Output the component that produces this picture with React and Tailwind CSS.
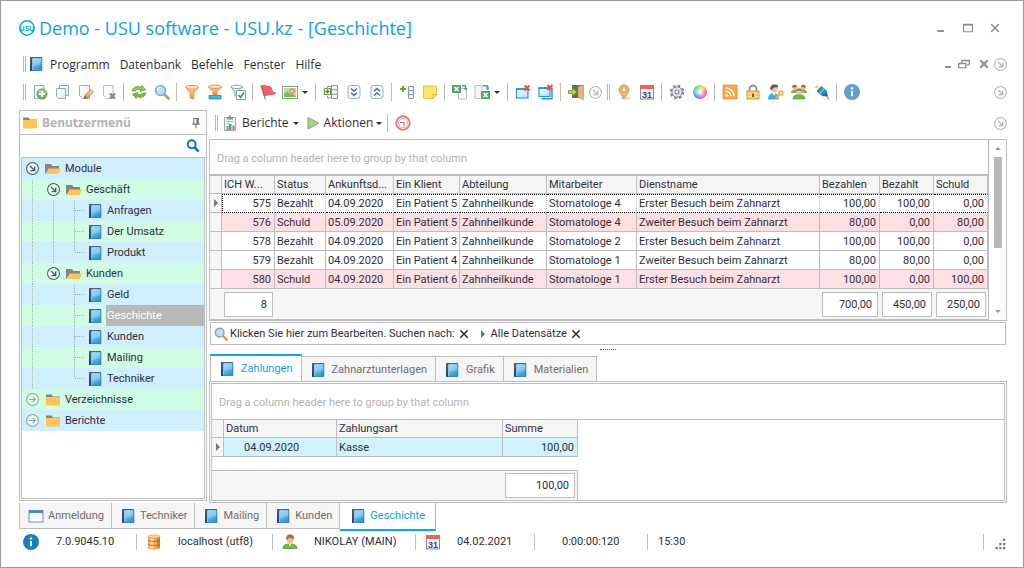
// src/App.jsx
// USU client main window: user menu, visit history grid, payments detail
import React, { useState } from 'react'

// Shared gradients for all the icons below
function IconDefs() {
  return (
    <svg className="absolute h-0 w-0" aria-hidden="true">
      <defs>
        <linearGradient id="gBook" x1="0" y1="0" x2="0.4" y2="1">
          <stop offset="0" stopColor="#8fd2f4" />
          <stop offset="0.5" stopColor="#6cc0ee" />
          <stop offset="1" stopColor="#2f97d8" />
        </linearGradient>
        <linearGradient id="gSpine" x1="0" y1="0" x2="0" y2="1">
          <stop offset="0" stopColor="#4a5f80" />
          <stop offset="1" stopColor="#1b3d74" />
        </linearGradient>
        <linearGradient id="gOrange" x1="0" y1="0" x2="0" y2="1">
          <stop offset="0" stopColor="#ffd9a8" />
          <stop offset="1" stopColor="#f08a32" />
        </linearGradient>
        <linearGradient id="gGreen" x1="0" y1="0" x2="0" y2="1">
          <stop offset="0" stopColor="#b6e38a" />
          <stop offset="1" stopColor="#5fae3a" />
        </linearGradient>
        <linearGradient id="gPaper" x1="0" y1="0" x2="1" y2="1">
          <stop offset="0" stopColor="#ffffff" />
          <stop offset="1" stopColor="#dfe8f5" />
        </linearGradient>
        <linearGradient id="gWin" x1="0" y1="0" x2="1" y2="1">
          <stop offset="0" stopColor="#ffffff" />
          <stop offset="1" stopColor="#aedcf8" />
        </linearGradient>
      </defs>
    </svg>
  )
}

function Ico({ children, className = 'h-4 w-4' }) {
  return <svg viewBox="0 0 16 16" fill="none" className={`shrink-0 ${className}`} aria-hidden="true">{children}</svg>
}

const Book = () => (
  <Ico>
    <path d="M2 1h12v1.500H2z" fill="#53647e" />
    <path d="M2 1.500h3V15H2z" fill="url(#gSpine)" />
    <rect x="5" y="2" width="9" height="12.500" fill="url(#gBook)" />
    <path d="M5 3h8.500v5L5 10z" fill="#fff" opacity=".2" />
    <path d="M4.500 2.500v12" stroke="#d6eefb" strokeWidth=".7" />
    <path d="M3 14.500h11M13.800 2v12.500" stroke="#2878b0" strokeWidth=".8" />
  </Ico>
)
const Folder = () => (
  <Ico>
    <path d="M1 2.500h5.500L8 4.500h7V7H1z" fill="#858585" />
    <path d="M1 5h14v8.500H1z" fill="#ffc35c" />
  </Ico>
)
const FolderOpen = () => (
  <Ico>
    <path d="M0 13V3h6l1.500 2H14v3H4.500z" fill="#858585" />
    <path d="M3.500 7.500H16L13.500 13H1z" fill="#ffc35c" />
  </Ico>
)
const NewDoc = () => (
  <Ico>
    <path d="M2.500 1.500H12v13H2.500z" fill="url(#gPaper)" stroke="#8fa9cf" />
    <circle cx="10" cy="10" r="5" fill="url(#gGreen)" stroke="#5b9b45" />
    <path d="M10 7v6M7 10h6" stroke="#fff" strokeWidth="1.800" />
  </Ico>
)
const Copy = () => (
  <Ico>
    <path d="M4.500 1.500h9v10h-9z" fill="url(#gPaper)" stroke="#8fa9cf" />
    <path d="M1.500 4.500h9v10h-7l-2-2z" fill="url(#gPaper)" stroke="#8fa9cf" />
  </Ico>
)
const Edit = () => (
  <Ico>
    <path d="M1.500 1.500h10v13h-7l-3-3z" fill="url(#gPaper)" stroke="#8fa9cf" />
    <path d="M6 14.500 7.200 11 13 5.500 15.500 8 9.500 13.500z" fill="url(#gOrange)" stroke="#b87333" strokeWidth=".8" />
    <path d="M6 14.500 7 12l1.500 1.500z" fill="#555" />
  </Ico>
)
const DeleteDoc = () => (
  <Ico>
    <path d="M2.500 1.500h9.500v13H5.500l-3-3z" fill="#fafafa" stroke="#bdbdbd" />
    <path d="M9 9.500 14 14.500M14 9.500 9 14.500" stroke="#8b8b8b" strokeWidth="2.400" />
  </Ico>
)
const Refresh = () => (
  <Ico>
    <path d="M1 7C2 3 6 1.500 10 3.500L11 1.500 14.500 6 9 7.500 9.800 5.800C7 4.600 5 5 4.200 7.200z" fill="#8bd04f" stroke="#4f9a2c" strokeWidth=".7" />
    <path d="M15 9c-1 4-5 5.500-9 3.500L5 14.500 1.500 10 7 8.500 6.200 10.200c2.800 1.200 4.800.8 5.600-1.400z" fill="#6fbf3f" stroke="#4f9a2c" strokeWidth=".7" />
  </Ico>
)
const Magnifier = () => (
  <Ico>
    <path d="M10.500 10.500 14.500 14.500" stroke="#dd9150" strokeWidth="2.600" strokeLinecap="round" />
    <circle cx="6.500" cy="6.500" r="5" fill="#bfe0f8" stroke="#7fa3d4" strokeWidth="1.400" />
    <path d="M3.500 6a3 3 0 0 1 3-2.800" stroke="#fff" strokeWidth="1.300" />
  </Ico>
)
const FunnelShape = ({ fill, stroke }) => (
  <>
    <path d="M1.500 3.500 6.300 9v5l3.400 1V9l4.800-5.500z" fill={fill} stroke={stroke} strokeWidth=".9" />
    <ellipse cx="8" cy="3.300" rx="6.500" ry="1.900" fill="#ffe3bf" stroke={stroke} strokeWidth=".9" />
  </>
)
const Funnel = () => <Ico><FunnelShape fill="url(#gOrange)" stroke="#dd8a3e" /></Ico>
const FunnelEdit = () => (
  <Ico>
    <path d="M1.500 3 6 7.500v3.500h4V7.500L14.500 3z" fill="url(#gOrange)" stroke="#dd8a3e" strokeWidth=".9" />
    <ellipse cx="8" cy="2.800" rx="6.500" ry="1.700" fill="#ffe3bf" stroke="#dd8a3e" strokeWidth=".9" />
    <path d="M2 11.500h12v3.500H2z" fill="#3cb7e8" stroke="#1c86b8" strokeWidth=".8" />
  </Ico>
)
const FunnelCheck = () => (
  <Ico>
    <path d="M1 3 5 8v4l2.500 1V8l5-5z" fill="#e4e8f0" stroke="#8790a6" strokeWidth=".9" />
    <ellipse cx="6.500" cy="2.800" rx="5.700" ry="1.700" fill="#fff" stroke="#8790a6" strokeWidth=".9" />
    <path d="M6.500 6.500h9v9h-9z" fill="#fff" stroke="#7f9cc4" />
    <path d="M8.500 11l2 2.300L14 8.500" stroke="#3c9c3c" strokeWidth="1.700" />
  </Ico>
)
const Flag = () => (
  <Ico>
    <path d="M1 1.500 5.500 15.500" stroke="#9c8b86" strokeWidth="1.300" />
    <path d="M1.500 2c3-2.300 4.500 1 7 .3 2.300-.6 2.800 1.400 3.500 3.700.7 2.300 1.800 2.500 3.800 2.500-1.800 3-4.300 1.300-6.800 2.300-1.900.8-3.300.3-4.800 1z" fill="#ec6468" stroke="#cc4147" strokeWidth=".7" />
  </Ico>
)
const Picture = () => (
  <Ico>
    <rect x=".5" y="2.500" width="15" height="12" fill="#fff" stroke="#86a66e" />
    <path d="M2 4h12v9H2z" fill="#a9d8e6" />
    <path d="M2 13V9.500l3.500-2 3 3 2-1L14 13z" fill="#7dbb50" />
    <circle cx="10" cy="7" r="2.800" fill="#f59042" />
    <circle cx="10" cy="7" r="1" fill="#ffe9a8" />
  </Ico>
)
const PlusGrid = () => (
  <Ico>
    <path d="M8.500 1.500h6v13h-6zM8.500 5.800h6M8.500 10.200h6" fill="#f4f6fb" stroke="#8795b5" />
    <path d="M8 2.500H4.500v2M4.500 12v2H8" stroke="#8795b5" />
    <rect x="1.500" y="4.500" width="6" height="6" fill="#eaf7dc" stroke="#6d9c46" />
    <path d="M4.500 5.500v4M2.500 7.500h4" stroke="#4b8f26" strokeWidth="1.300" />
  </Ico>
)
const ExpandAll = () => (
  <Ico>
    <rect x="2" y="1.500" width="12" height="13" rx="2.500" fill="#f7fbff" stroke="#8fb0cc" />
    <path d="M5 4.500l3 2.500 3-2.500M5 8.800l3 2.500 3-2.500" stroke="#4a6a9e" strokeWidth="1.500" />
  </Ico>
)
const CollapseAll = () => (
  <Ico>
    <rect x="2" y="1.500" width="12" height="13" rx="2.500" fill="#f7fbff" stroke="#8fb0cc" />
    <path d="M5 7.200l3-2.500 3 2.500M5 11.500l3-2.500 3 2.500" stroke="#4a6a9e" strokeWidth="1.500" />
  </Ico>
)
const PlusColumn = () => (
  <Ico>
    <path d="M9.500 2.500h5v12h-5zM9.500 6.500h5M9.500 10.500h5" fill="#f1f4fb" stroke="#8795b5" />
    <path d="M4 2v6M1 5h6" stroke="#6aa43c" strokeWidth="2.200" />
  </Ico>
)
const Note = () => (
  <Ico>
    <path d="M1.500 2h13v8.500L11 14.500H1.500z" fill="#fbe566" stroke="#dcb93a" strokeWidth=".8" />
    <path d="M14.500 10.500H11v4z" fill="#fff6b8" stroke="#cfa62c" strokeWidth=".8" />
  </Ico>
)
const ExcelExport = () => (
  <Ico>
    <path d="M6.500 4.500h8v10.500h-8z" fill="#fff" stroke="#bdbdbd" />
    <rect x="0" y="1" width="9" height="8" fill="#57a566" />
    <path d="M2.500 3l4 4M6.500 3l-4 4" stroke="#fff" strokeWidth="1.500" />
    <path d="M10 1.800h3.500v3" stroke="#3a9fd6" strokeWidth="1.500" />
    <path d="M11.300 4h4.400l-2.200 2.500z" fill="#3a9fd6" />
  </Ico>
)
const ExcelImport = () => (
  <Ico>
    <path d="M1 1.500h7v13H1z" fill="#f7f7f7" stroke="#c2c2c2" />
    <rect x="7" y="7" width="9" height="8" fill="#57a566" />
    <path d="M9.500 9l4 4M13.500 9l-4 4" stroke="#fff" strokeWidth="1.500" />
    <path d="M9 1.800h4.500v2" stroke="#3a9fd6" strokeWidth="1.500" />
    <path d="M11.300 3.500h4.400L13.500 6z" fill="#3a9fd6" />
  </Ico>
)
const CloseWin = () => (
  <Ico>
    <rect x="1.500" y="5" width="11.500" height="9" fill="url(#gWin)" stroke="#2596dc" strokeWidth="1.200" />
    <path d="M1 5h12.500" stroke="#2596dc" strokeWidth="1.800" />
    <path d="M9.500 1.500l5 5M14.500 1.500l-5 5" stroke="#e0523a" strokeWidth="2" />
  </Ico>
)
const CloseAllWin = () => (
  <Ico>
    <path d="M3.500 14.800H14V6" stroke="#2596dc" strokeWidth="1.400" />
    <rect x="1" y="4" width="11" height="8.500" fill="url(#gWin)" stroke="#2596dc" strokeWidth="1.200" />
    <path d="M.5 4h12" stroke="#2596dc" strokeWidth="1.800" />
    <path d="M9.500 1l5 5M14.500 1l-5 5" stroke="#e0523a" strokeWidth="2" />
  </Ico>
)
const Exit = () => (
  <Ico>
    <path d="M4 1h11v13H4z" fill="#6e6a6a" />
    <path d="M10 2.500 15.500 1v14.500L10 13.500z" fill="#e9b27c" stroke="#b98450" strokeWidth=".6" />
    <path d="M.5 6.500h4V4L9 8l-4.500 4V9.500h-4z" fill="#a4da4c" stroke="#5f9a22" strokeWidth=".8" />
  </Ico>
)
const Pin = () => (
  <Ico>
    <ellipse cx="9.500" cy="14" rx="5" ry="1.500" fill="#d9d9d9" />
    <path d="M8 15C6 11 3 9 3 5.800a5 5 0 0 1 10 0C13 9 10 11 8 15z" fill="#eeb46a" stroke="#c99048" strokeWidth=".8" />
    <circle cx="8" cy="5.800" r="2.100" fill="#fff" stroke="#c99048" strokeWidth=".7" />
  </Ico>
)
const Calendar = () => (
  <Ico>
    <rect x="1.500" y="1.500" width="13" height="13.500" fill="#f3f5fb" stroke="#7f8bb0" />
    <rect x="1" y="1" width="14" height="4" fill="#e9665c" />
    <text x="8" y="13.500" textAnchor="middle" fill="#3c4a7a" className="font-['Liberation_Sans'] text-[9px] font-bold">31</text>
  </Ico>
)
const Gear = () => (
  <Ico>
    <circle cx="8" cy="8" r="6.300" stroke="#7d8499" strokeWidth="2" strokeDasharray="2.600 2.350" />
    <circle cx="8" cy="8" r="5.200" fill="#e4e8f1" stroke="#7d8499" strokeWidth="1" />
    <circle cx="8" cy="8" r="2" fill="#fff" stroke="#7d8499" strokeWidth="1.100" />
  </Ico>
)
const Rss = () => (
  <Ico>
    <rect x="1" y="1" width="14" height="14" fill="#f9a64a" stroke="#ee8e2c" strokeWidth=".8" />
    <circle cx="4.800" cy="11.500" r="1.300" fill="#fff" />
    <path d="M3.800 7.300a5 5 0 0 1 5 5M3.800 4a8.300 8.300 0 0 1 8.300 8.300" stroke="#fff" strokeWidth="1.500" />
  </Ico>
)
const Lock = () => (
  <Ico>
    <path d="M4.500 8V5a3.500 3.500 0 0 1 7 0v3" stroke="#8f8f8f" strokeWidth="1.800" />
    <rect x="2" y="7" width="12" height="8" fill="#fbc967" stroke="#cf9236" strokeWidth=".9" />
    <path d="M2.500 9.500h11M2.500 12.500h11" stroke="#fde6ae" strokeWidth=".8" />
    <path d="M7 9.500h2v3.500H7z" fill="#7d6030" />
  </Ico>
)
const UserKey = () => (
  <Ico>
    <path d="M0 15.500c0-4.500 2.500-6.500 5.500-6.500s5.500 2 5.500 6.500z" fill="#41aee8" />
    <path d="M4.500 9h3L6 12z" fill="#fff" />
    <circle cx="6.300" cy="4.800" r="3.700" fill="#efc49c" />
    <path d="M2.300 5.500C1.800 1 5 0 7.500.5 10 .6 10.500 2.500 9.900 3.500 7.500 2.800 5 3 4 6z" fill="#5d5d5d" />
    <circle cx="12.800" cy="9" r="2" stroke="#efb040" strokeWidth="1.700" />
    <path d="M11.500 10.500 7.500 14.500M9 13l1.500 1.500" stroke="#efb040" strokeWidth="1.600" />
  </Ico>
)
const Group = () => (
  <Ico>
    <path d="M0 9c0-2.500 1.500-3 3.500-3S7 6.500 7 9zM9 9c0-2.500 1.500-3 3.500-3S16 6.500 16 9z" fill="#6fb84a" />
    <circle cx="3.800" cy="3.500" r="2.500" fill="#efb98c" />
    <circle cx="12.200" cy="3.500" r="2.500" fill="#efb98c" />
    <path d="M1.200 3.500C1.200.8 3 .5 4 .8s2 1 2 2.200zM14.800 3.500c0-2.700-1.800-3-2.800-2.700s-2 1-2 2.200z" fill="#a9603a" />
    <path d="M2 15C2 11.500 5 10.500 8 10.500s6 1 6 4.500z" fill="#6fb84a" stroke="#4e9230" strokeWidth=".6" />
    <circle cx="8" cy="8" r="2.800" fill="#f3c59c" />
    <path d="M5.200 7.500C5 5 6.500 4.500 8 4.500s3 .5 2.800 3C9.500 6.300 7 6.300 5.200 7.500z" fill="#a9603a" />
  </Ico>
)
const Plug = () => (
  <Ico>
    <path d="M1.500 4 4 2M4 6.500 7 3" stroke="#e3b155" strokeWidth="1.600" />
    <path d="M3 7 7.500 2.500 13 7.500 8.500 12z" fill="#2d8fd2" stroke="#1c64a0" strokeWidth=".7" />
    <path d="M5.500 9.500l5-5" stroke="#7cc8f4" strokeWidth="1.200" />
    <path d="M8.500 12 13 7.800l1 5z" fill="#2a5c8d" />
    <path d="M13.500 12.500l1.200 3" stroke="#9b9b9b" strokeWidth="1.300" />
  </Ico>
)
const Info = ({ color }) => (
  <Ico>
    <circle cx="8" cy="8" r="8" fill={color} />
    <path d="M8 7v5.300" stroke="#fff" strokeWidth="2" />
    <circle cx="8" cy="4.500" r="1.200" fill="#fff" />
  </Ico>
)
const ClipboardChart = () => (
  <Ico>
    <path d="M2.500 2.500h11v13h-11z" fill="#f7f7f7" stroke="#a9a9a9" />
    <path d="M5 2h6v2.500H5zM7 .5h2V3H7z" fill="#8d8d8d" />
    <path d="M4.500 6.500h7M4.500 8.500h3" stroke="#b5b5b5" />
    <path d="M4.500 11h2v4h-2z" fill="#54b466" />
    <path d="M7 9h2.500v6H7z" fill="#2fa5e0" />
    <path d="M10.500 10.500h2V15h-2z" fill="#e5604d" />
  </Ico>
)
const Play = () => <Ico><path d="M3 2.500v11.500L14 8.200z" fill="#a9d08a" stroke="#7eb25c" /></Ico>
const RedClock = () => (
  <Ico>
    <circle cx="8" cy="8" r="6.700" fill="#fff" stroke="#e2827d" strokeWidth="2" />
    <circle cx="8" cy="8" r="4.600" stroke="#e9a29e" strokeWidth="1" />
    <path d="M5 7.500h4V11" stroke="#a87674" strokeWidth="1.200" />
  </Ico>
)
const CircleArrow = ({ color = '#b4b4b4', right }) => (
  <Ico className="h-[13px] w-[13px]">
    <circle cx="8" cy="8" r="7.300" fill="#fff" fillOpacity=".6" stroke={color} strokeWidth="1.300" />
    {right
      ? <path d="M4 8h7.500M8.200 4.700 11.500 8l-3.300 3.300" stroke={color} strokeWidth="1.400" />
      : <path d="M5 5l5.500 5.500M10.700 5.500v5.200H5.500" stroke={color} strokeWidth="1.600" />}
  </Ico>
)
const WindowIcon = () => (
  <Ico>
    <rect x="1" y="2.500" width="14" height="11.500" fill="#fdfdfd" stroke="#5d98cf" />
    <path d="M1 4h14" stroke="#3f87cb" strokeWidth="2" />
  </Ico>
)
const Database = () => (
  <Ico>
    <path d="M2 2.500h12v12c-3 1.500-9 1.500-12 0z" fill="#f6a94c" />
    <path d="M4 3h4v11.500H4z" fill="#ffe4b5" opacity=".8" />
    <path d="M11 3h3v11h-3z" fill="#c86f22" opacity=".7" />
    <ellipse cx="8" cy="2.500" rx="6" ry="1.600" fill="#ffd998" stroke="#d98a34" strokeWidth=".6" />
    <path d="M2 6.500c3 1.300 9 1.300 12 0M2 10.500c3 1.300 9 1.300 12 0" stroke="#b5652a" strokeWidth=".9" />
  </Ico>
)
const Person = () => (
  <Ico>
    <path d="M1 14.500c0-3.500 3-4.500 7-4.500s7 1 7 4.500z" fill="#6cbb3e" stroke="#468c26" strokeWidth=".7" />
    <path d="M6.500 9.500h3L8 12.500z" fill="#fff" />
    <ellipse cx="8" cy="5.800" rx="3.300" ry="4" fill="#f2bd8e" />
    <path d="M4.300 6C3.500 2 5.500.5 8.200.5S12.500 2 11.700 6C10.500 3.500 6.500 3 4.300 6z" fill="#b06a3b" />
  </Ico>
)
const Logo = () => (
  <Ico>
    <circle cx="8" cy="8" r="7.200" stroke="#0d9fe8" strokeWidth="1.500" />
    <text x="8" y="10.500" textAnchor="middle" fill="#0d9fe8" className="font-['Liberation_Sans'] text-[7px] font-bold">USU</text>
  </Ico>
)
const ColorWheel = () => (
  <span className="h-3.5 w-3.5 rounded-full bg-[radial-gradient(circle,#fff_0%,transparent_65%),conic-gradient(from_90deg,#fa5f72,#f25fd8,#7a6cf5,#3fc9f2,#5fe06a,#f5dd4b,#fa5f72)]" />
)

const Caret = () => <span className="border-x-[3px] border-t-[3px] border-x-transparent border-t-[#333]" />
const Sep = () => <span className="flex w-[7px] shrink-0 justify-center"><i className="h-[18px] w-px bg-[#bdbdbd]" /></span>
const Grip = () => <span className="h-4 w-[3px] shrink-0 border-x border-[#b5b5b5]" />

// Main toolbar; "|" is a separator, "||" starts a new band
const TOOLBAR = [
  ['Hinzufügen', NewDoc], ['Kopieren', Copy], ['Bearbeiten', Edit], ['Löschen', DeleteDoc], '|',
  ['Aktualisieren', Refresh], ['Suchen', Magnifier], '|',
  ['Filter', Funnel], ['Filter bearbeiten', FunnelEdit], ['Filter anwenden', FunnelCheck], '|',
  ['Markieren', Flag], ['Bild', Picture, true], '|',
  ['Gruppieren', PlusGrid], ['Alle aufklappen', ExpandAll], ['Alle zuklappen', CollapseAll], '|',
  ['Spalte hinzufügen', PlusColumn], ['Notiz', Note], '|',
  ['Excel-Export', ExcelExport], ['Excel-Import', ExcelImport, true], '|',
  ['Fenster schließen', CloseWin], ['Alle Fenster schließen', CloseAllWin], '|',
  ['Beenden', Exit], ['Weitere', CircleArrow], '||',
  ['Karte', Pin], ['Kalender', Calendar], '|',
  ['Einstellungen', Gear], ['Farben', ColorWheel], '|',
  ['Nachrichten', Rss], ['Sperren', Lock], ['Zugriffsrechte', UserKey], ['Benutzer', Group], ['Verbindung', Plug], '|',
  ['Info', () => <Info color="#5f9fca" />],
]

const MENU = ['Programm', 'Datenbank', 'Befehle', 'Fenster', 'Hilfe']

// cells: what stands in each 21px indent column
const TREE = [
  { name: 'Module', cells: ['open'], icon: FolderOpen },
  { name: 'Geschäft', cells: ['line', 'open'], icon: FolderOpen },
  { name: 'Anfragen', cells: ['line', 'line', 'tee'], icon: Book },
  { name: 'Der Umsatz', cells: ['line', 'line', 'tee'], icon: Book },
  { name: 'Produkt', cells: ['line', 'line', 'end'], icon: Book },
  { name: 'Kunden', cells: ['line', 'open'], icon: FolderOpen },
  { name: 'Geld', cells: ['line', 'none', 'tee'], icon: Book },
  { name: 'Geschichte', cells: ['line', 'none', 'tee'], icon: Book },
  { name: 'Kunden', cells: ['line', 'none', 'tee'], icon: Book },
  { name: 'Mailing', cells: ['line', 'none', 'tee'], icon: Book },
  { name: 'Techniker', cells: ['line', 'none', 'end'], icon: Book },
  { name: 'Verzeichnisse', cells: ['closed'], icon: Folder },
  { name: 'Berichte', cells: ['closed'], icon: Folder },
]

const VISIT_COLS = [
  { label: 'ICH W...', w: 'w-[53px]', num: true },
  { label: 'Status', w: 'w-[51px]' },
  { label: 'Ankunftsd...', w: 'w-[68px]' },
  { label: 'Ein Klient', w: 'w-[66px]' },
  { label: 'Abteilung', w: 'w-[87px]' },
  { label: 'Mitarbeiter', w: 'w-[90px]' },
  { label: 'Dienstname', w: '' },
  { label: 'Bezahlen', w: 'w-[60px]', num: true },
  { label: 'Bezahlt', w: 'w-[54px]', num: true },
  { label: 'Schuld', w: 'w-[54px]', num: true },
]
const VISITS = [
  ['575', 'Bezahlt', '04.09.2020', 'Ein Patient 5', 'Zahnheilkunde', 'Stomatologe 4', 'Erster Besuch beim Zahnarzt', '100,00', '100,00', '0,00'],
  ['576', 'Schuld', '05.09.2020', 'Ein Patient 5', 'Zahnheilkunde', 'Stomatologe 4', 'Zweiter Besuch beim Zahnarzt', '80,00', '0,00', '80,00'],
  ['578', 'Bezahlt', '04.09.2020', 'Ein Patient 3', 'Zahnheilkunde', 'Stomatologe 2', 'Erster Besuch beim Zahnarzt', '100,00', '100,00', '0,00'],
  ['579', 'Bezahlt', '04.09.2020', 'Ein Patient 4', 'Zahnheilkunde', 'Stomatologe 1', 'Zweiter Besuch beim Zahnarzt', '80,00', '80,00', '0,00'],
  ['580', 'Schuld', '04.09.2020', 'Ein Patient 6', 'Zahnheilkunde', 'Stomatologe 1', 'Erster Besuch beim Zahnarzt', '100,00', '0,00', '100,00'],
]
const TOTALS = ['8', '', '', '', '', '', '', '700,00', '450,00', '250,00']

const DETAIL_TABS = ['Zahlungen', 'Zahnarztunterlagen', 'Grafik', 'Materialien']
const WINDOW_TABS = ['Anmeldung', 'Techniker', 'Mailing', 'Kunden', 'Geschichte']

function TitleBar() {
  return (
    <header className="flex h-[50px] items-center pt-1">
      <Logo />
      <h1 className="ml-1 font-['Open_Sans',sans-serif] text-[18px] text-[#0d9fe8]">Demo - USU software - USU.kz - [Geschichte]</h1>
      <div className="ml-auto flex gap-[15px] pr-1.5 text-[#8a8a8a]">
        <button aria-label="Minimieren"><Ico className="h-3 w-3"><path d="M3 12h9" stroke="currentColor" strokeWidth="2.500" /></Ico></button>
        <button aria-label="Maximieren"><Ico className="h-3 w-3"><path d="M2 3h12v10H2zM2 4h12" stroke="currentColor" strokeWidth="1.500" /></Ico></button>
        <button aria-label="Schließen"><Ico className="h-3 w-3"><path d="M3 3l10 10M13 3 3 13" stroke="currentColor" strokeWidth="2" /></Ico></button>
      </div>
    </header>
  )
}

function MenuBar() {
  return (
    <nav className="flex h-[26px] items-center pl-1 font-['Open_Sans',sans-serif] text-[12px]">
      <Grip />
      <span className="ml-0.5 mr-1.5 flex"><Book /></span>
      <div className="flex gap-2.5 pt-px">
        {MENU.map(m => <button key={m}>{m}</button>)}
      </div>
      <div className="ml-auto flex items-center gap-1 text-[#8a8a8a]">
        <button aria-label="Fenster minimieren"><Ico className="h-3 w-3"><path d="M4 12h8" stroke="currentColor" strokeWidth="2.500" /></Ico></button>
        <button aria-label="Fenster wiederherstellen"><Ico className="h-3 w-3"><path d="M5 6V3h10v6h-3M1 7h9.500v6H1zM5 3.500h10M1 7.500h9.500" stroke="currentColor" strokeWidth="1.600" /></Ico></button>
        <button aria-label="Fenster schließen" className="ml-1"><Ico className="h-3 w-3"><path d="M3 3l10 10M13 3 3 13" stroke="currentColor" strokeWidth="2.400" /></Ico></button>
        <button aria-label="Menü anpassen"><CircleArrow /></button>
      </div>
    </nav>
  )
}

function Toolbar() {
  return (
    <div className="flex h-[30px] items-center pl-1">
      <Grip />
      <div className="ml-0.5 flex items-center">
        {TOOLBAR.map((t, i) => {
          if (t === '|') return <Sep key={i} />
          if (t === '||') return <span key={i} className="flex w-[7px] justify-center"><Grip /></span>
          const [label, Icon, drop] = t
          return (
            <button key={i} aria-label={label}
              className={drop ? 'flex h-6 w-[33px] items-center gap-1 pl-[3px]' : label === 'Weitere' ? 'flex h-6 w-[18px] items-center pl-0.5' : 'flex h-6 w-[23px] items-center justify-center'}>
              <Icon />
              {drop && <Caret />}
            </button>
          )
        })}
      </div>
      <button aria-label="Leiste anpassen" className="ml-auto"><CircleArrow /></button>
    </div>
  )
}

function TreeCell({ kind }) {
  return (
    <span className="flex h-[21px] w-[21px] shrink-0 items-center justify-center">
      {kind === 'open' && <CircleArrow color="#3d5b5f" />}
      {kind === 'closed' && <CircleArrow color="#8aa59a" right />}
      {(kind === 'line' || kind === 'tee' || kind === 'end') && (
        <svg viewBox="0 0 21 21" className="h-[21px] w-[21px]" fill="none" stroke="#a3b5b5" strokeDasharray="1 1" aria-hidden="true">
          <path d={kind === 'end' ? 'M10.500 0v10' : 'M10.500 0v21'} />
          {kind !== 'line' && <path d="M11 10.500h10" />}
        </svg>
      )}
    </span>
  )
}

function UserMenu() {
  const [selected, setSelected] = useState(7)
  return (
    <aside className="mb-0.5 flex w-[188px] shrink-0 flex-col border border-[#bdbdbd]">
      <div className="flex h-6 items-center border-b border-[#bdbdbd] pl-0.5 pr-1">
        <Folder />
        <h2 className="ml-1 font-['Noto_Sans',sans-serif] text-[12px] font-bold text-[#b3b3b3]">Benutzermenü</h2>
        <button aria-label="Anheften" className="ml-auto"><Ico className="h-3 w-3"><path d="M4 2h8M5 2v7M11 2v7M3 9.500h10M8 10v5" stroke="#777" strokeWidth="1.500" /><path d="M8.500 2H11v7H8.500z" fill="#777" /></Ico></button>
      </div>
      <label className="flex h-[22px] items-center pr-1.5">
        <input aria-label="Menü durchsuchen" className="min-w-0 flex-1 px-1 outline-none" />
        <Ico className="h-3.5 w-3.5"><circle cx="6.500" cy="6" r="4.500" stroke="#1270cc" strokeWidth="2.200" /><path d="M10 9.500l4.500 5" stroke="#1270cc" strokeWidth="2.800" /></Ico>
      </label>
      <ul className="mx-px mb-px flex-1 border border-[#bdbdbd]">
        {TREE.map((n, i) => {
          const Icon = n.icon
          return (
            <li key={i} className={`flex h-[21px] items-center ${i % 2 ? 'bg-[#cffce3]' : 'bg-[#cfeffd]'}`}>
              {n.cells.map((c, k) => <TreeCell key={k} kind={c} />)}
              <span className="flex w-[21px] shrink-0 pl-0.5"><Icon /></span>
              <button onClick={() => setSelected(i)}
                className={`h-full flex-1 pl-px pt-px text-left ${selected === i ? 'bg-[#b8b8b8] text-white' : ''}`}>
                {n.name}
              </button>
            </li>
          )
        })}
      </ul>
    </aside>
  )
}

function RowMark({ on }) {
  return (
    <td className="border-b border-r border-[#bdbdbd] bg-[#f5f5f5]">
      {on && <span className="mx-auto block w-0 border-y-4 border-l-4 border-y-transparent border-l-[#777]" />}
    </td>
  )
}

const HEAD_CELL = 'h-[18px] overflow-hidden whitespace-nowrap border-b border-r border-[#bdbdbd] bg-[#f5f5f5] pl-0.5 text-left font-normal leading-[17px]'

function VisitGrid() {
  return (
    <section className="flex border border-[#bdbdbd]">
      <div className="min-w-0 flex-1">
        <p className="flex h-[34px] items-center pl-[7px] pt-[3px] text-[#b3b3b3]">Drag a column header here to group by that column</p>
        <table className="w-full table-fixed border-separate border-spacing-0 border-t-2 border-[#bdbdbd]">
          <thead>
            <tr>
              <th aria-label="Zeile" className={`w-3 ${HEAD_CELL}`} />
              {VISIT_COLS.map(c => <th key={c.label} className={`${c.w} ${HEAD_CELL}`}>{c.label}</th>)}
            </tr>
          </thead>
          <tbody>
            {VISITS.map((v, r) => (
              <tr key={v[0]} className={v[1] === 'Schuld' ? 'bg-[#fedfe3]' : ''}>
                <RowMark on={r === 0} />
                {v.map((t, c) => (
                  <td key={c}
                    className={`h-[19px] whitespace-nowrap border-r border-r-[#bdbdbd] leading-[17px] ${VISIT_COLS[c].num ? 'pr-[3px] text-right' : 'pl-0.5'} ${r === 0 ? 'border-y border-dotted border-y-black' : 'border-b border-b-[#bdbdbd]'} ${r === 0 && c === 0 ? 'border-l border-l-black' : ''}`}>
                    {t}
                  </td>
                ))}
              </tr>
            ))}
          </tbody>
          <tfoot className="bg-[#f5f5f5]">
            <tr>
              <td className="h-[31px] border-b border-[#bdbdbd]" />
              {TOTALS.map((t, i) => (
                <td key={i} className="h-[31px] border-b border-[#bdbdbd] px-0.5">
                  {t && <span className="block h-[25px] border border-[#bdbdbd] bg-white pr-[5px] text-right leading-6">{t}</span>}
                </td>
              ))}
            </tr>
          </tfoot>
        </table>
      </div>
      <div className="flex w-[18px] shrink-0 flex-col items-center border-l border-[#bdbdbd] py-[7px]">
        <span className="border-x-[3px] border-b-[3px] border-x-transparent border-b-[#999]" />
        <span className="mt-[7px] h-[91px] w-2 bg-[#b8b8b8]" />
        <span className="mt-auto border-x-[3px] border-t-[3px] border-x-transparent border-t-[#999]" />
      </div>
    </section>
  )
}

const XMark = () => <Ico className="h-2.5 w-2.5"><path d="M2 2l12 12M14 2 2 14" stroke="#222" strokeWidth="2.200" /></Ico>

function SearchBar() {
  return (
    <div className="mx-px mt-px flex h-[23px] shrink-0 items-center border border-[#bdbdbd] pl-[3px]">
      <Ico className="h-3.5 w-3.5"><path d="M10.500 10.500 14.500 14.500" stroke="#dd9150" strokeWidth="2.600" strokeLinecap="round" /><circle cx="6.500" cy="6.500" r="5" fill="#bfe0f8" stroke="#7fa3d4" strokeWidth="1.600" /></Ico>
      <button className="ml-0.5 pt-px">Klicken Sie hier zum Bearbeiten. Suchen nach:</button>
      <button aria-label="Suche löschen" className="ml-1"><XMark /></button>
      <span className="ml-3 border-y-4 border-l-4 border-y-transparent border-l-[#1d86c8]" />
      <button className="ml-1.5 pt-px">Alle Datensätze</button>
      <button aria-label="Filter löschen" className="ml-1"><XMark /></button>
    </div>
  )
}

function DetailPanel() {
  const [tab, setTab] = useState('Zahlungen')
  return (
    <>
      <div role="tablist" className="ml-px flex h-[27px] shrink-0 items-end">
        {DETAIL_TABS.map(t => (
          <button key={t} role="tab" aria-selected={tab === t} onClick={() => setTab(t)}
            className={tab === t
              ? 'flex h-[27px] items-center gap-1.5 border-x border-t-2 border-x-[#bdbdbd] border-t-[#0da4f0] bg-white px-2 pt-px text-[#0d9fe8]'
              : 'flex h-[25px] items-center gap-1.5 border-r border-t border-[#bdbdbd] bg-[#f5f5f5] px-2 pt-px text-[#6e6e6e]'}>
            <Book />{t}
          </button>
        ))}
      </div>
      <section className="flex flex-1 flex-col border border-[#bdbdbd] p-px">
        <div className="flex-1 border border-[#bdbdbd]">
          <p className="flex h-9 items-center border-b border-[#bdbdbd] pl-[7px] pt-[3px] text-[#b3b3b3]">Drag a column header here to group by that column</p>
          <table className="w-[366px] table-fixed border-separate border-spacing-0">
            <thead>
              <tr>
                <th aria-label="Zeile" className={`w-3 ${HEAD_CELL}`} />
                <th className={`w-[113px] ${HEAD_CELL}`}>Datum</th>
                <th className={`w-[166px] ${HEAD_CELL}`}>Zahlungsart</th>
                <th className={HEAD_CELL}>Summe</th>
              </tr>
            </thead>
            <tbody>
              <tr className="bg-[#cff2fd]">
                <RowMark on />
                <td className="h-[19px] border-b border-r border-[#bdbdbd] pl-5 leading-[17px]">04.09.2020</td>
                <td className="h-[19px] border-b border-r border-[#bdbdbd] pl-0.5 leading-[17px]">Kasse</td>
                <td className="h-[19px] border-b border-r border-[#bdbdbd] pr-[3px] text-right leading-[17px]">100,00</td>
              </tr>
            </tbody>
          </table>
          <div className="mt-[13px] flex h-[30px] w-[366px] items-center justify-end border-r border-t border-[#bdbdbd] bg-[#f5f5f5] pr-0.5">
            <span className="h-[25px] w-[70px] border border-[#bdbdbd] bg-white pr-[5px] text-right leading-6">100,00</span>
          </div>
        </div>
      </section>
    </>
  )
}

function StatusBar() {
  return (
    <footer className="flex h-[22px] items-center pl-1">
      <Info color="#1c80b8" />
      <span className="ml-[17px] w-20">7.0.9045.10</span>
      <i className="h-4 w-px bg-[#bdbdbd]" />
      <span className="ml-[9px] mr-4 flex"><Database /></span>
      <span className="w-[94px]">localhost (utf8)</span>
      <i className="h-4 w-px bg-[#bdbdbd]" />
      <span className="ml-[9px] mr-4 flex"><Person /></span>
      <span className="w-[101px]">NIKOLAY (MAIN)</span>
      <i className="h-4 w-px bg-[#bdbdbd]" />
      <span className="ml-[9px] mr-4 flex"><Calendar /></span>
      <span className="w-[77px]">04.02.2021</span>
      <i className="h-4 w-px bg-[#bdbdbd]" />
      <span className="ml-[27px] w-[85px]">0:00:00:120</span>
      <i className="h-4 w-px bg-[#bdbdbd]" />
      <span className="ml-2.5">15:30</span>
      <i className="ml-auto h-4 w-px bg-[#bdbdbd]" />
      <Ico className="ml-2.5 mr-px mt-1 h-3 w-3"><path d="M12 2.500h3M12 8h3M7 8h3M12 13.500h3M7 13.500h3M2 13.500h3" stroke="#777" strokeWidth="3" /></Ico>
    </footer>
  )
}

export default function App() {
  const [win, setWin] = useState('Geschichte')
  return (
    <div className="flex min-h-screen flex-col border border-[#999] bg-white pb-3.5 pl-[18px] pr-4 font-['Roboto',sans-serif] text-[11px] leading-4 text-[#2e2e3a]">
      <IconDefs />
      <TitleBar />
      <MenuBar />
      <Toolbar />
      <main className="mt-[3px] flex flex-1 gap-0.5">
        <UserMenu />
        <div className="flex min-w-0 flex-1 flex-col">
          <div className="flex h-[29px] shrink-0 items-center pb-[3px] pl-1.5 font-['Open_Sans',sans-serif] text-[12px]">
            <Grip />
            <button className="ml-1 flex items-center gap-1"><ClipboardChart />Berichte<Caret /></button>
            <button className="ml-1.5 flex items-center gap-[3px]"><Play />Aktionen<Caret /></button>
            <span className="ml-0.5 flex"><Sep /></span>
            <button aria-label="Zeitplan" className="ml-1"><RedClock /></button>
            <button aria-label="Leiste anpassen" className="ml-auto"><CircleArrow /></button>
          </div>
          <VisitGrid />
          <SearchBar />
          <div className="flex h-[9px] shrink-0 items-center justify-center"><i className="w-4 border-t border-dotted border-[#555]" /></div>
          <DetailPanel />
        </div>
      </main>
      <div role="tablist" className="flex h-7 items-start">
        {WINDOW_TABS.map((t, i) => (
          <button key={t} role="tab" aria-selected={win === t} onClick={() => setWin(t)}
            className={win === t
              ? 'flex h-7 items-center gap-1 border-b-2 border-r border-b-[#0da4f0] border-r-[#bdbdbd] bg-white px-2.5 text-[#0d9fe8]'
              : `flex h-[26px] items-center gap-1 border-b border-r border-[#bdbdbd] bg-[#f5f5f5] pl-2 pr-[7px] pt-px text-[#6e6e6e] ${i === 0 ? 'border-l' : ''}`}>
            {i === 0 ? <WindowIcon /> : <Book />}{t}
          </button>
        ))}
      </div>
      <StatusBar />
    </div>
  )
}
